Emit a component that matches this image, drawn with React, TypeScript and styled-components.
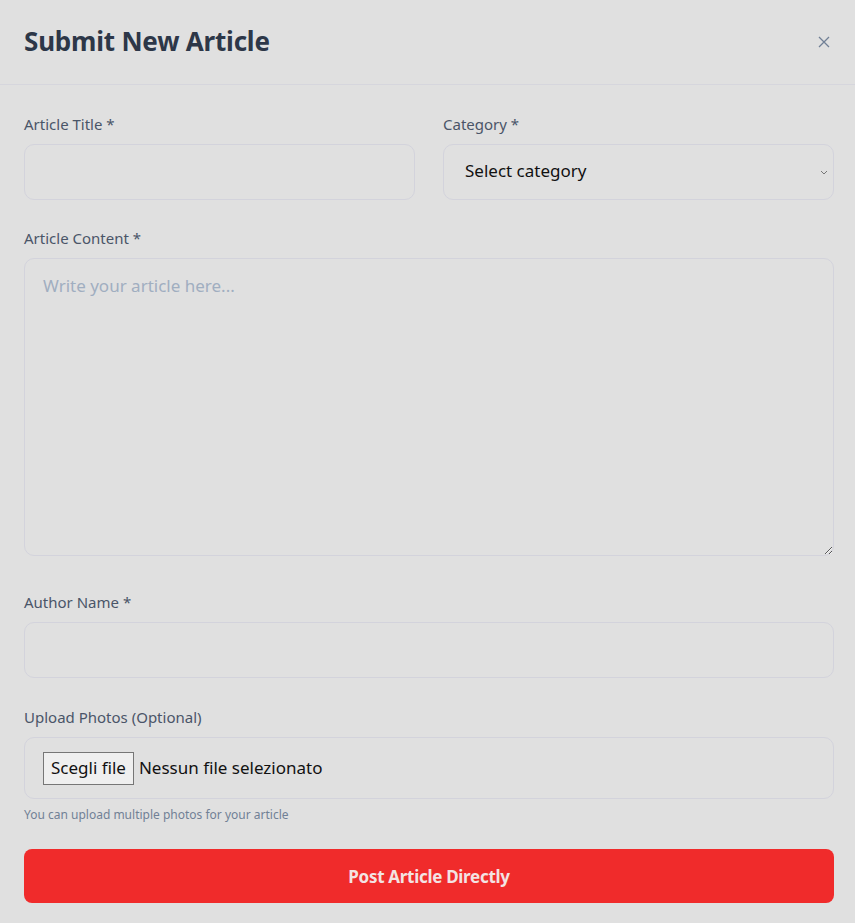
import React from "react";
import styled, { createGlobalStyle } from "styled-components";

const Global = createGlobalStyle`
  html, body { margin: 0; padding: 0; background: #e0e0e0; }
  body { font-family: "Noto Sans", "Open Sans", sans-serif; }
  * { box-sizing: border-box; }
`;

const Modal = styled.div`
  width: 855px;
  min-height: 923px;
  background: #e0e0e0;
`;

const Header = styled.header`
  height: 85px;
  display: flex;
  align-items: center;
  justify-content: space-between;
  padding: 0 24px 0 24px;
  border-bottom: 1px solid #d6d6dd;
`;

const Title = styled.h1`
  margin: 0 0 2px;
  font-size: 26px;
  font-weight: 700;
  color: #2d3748;
  letter-spacing: -0.2px;
`;

const Close = styled.button`
  border: none;
  background: none;
  padding: 0;
  margin-right: -1px;
  width: 16px;
  height: 16px;
  display: flex;
  align-items: center;
  justify-content: center;
  color: #718096;
  cursor: pointer;
`;

const Body = styled.form`
  padding: 0 21px 0 24px;
  display: flex;
  flex-direction: column;
`;

const Row = styled.div`
  display: grid;
  grid-template-columns: 1fr 1fr;
  column-gap: 28px;
`;

const Field = styled.div<{ $top: number }>`
  display: flex;
  flex-direction: column;
  margin-top: ${(p) => p.$top}px;
`;

const Label = styled.label`
  font-size: 15px;
  line-height: 20px;
  font-weight: 400;
  color: #4a5568;
  margin-bottom: 10px;
`;

const inputBase = `
  width: 100%;
  border: 1px solid #d3d3dc;
  border-radius: 10px;
  background: #e0e0e0;
  font-family: "Noto Sans", "Open Sans", sans-serif;
  font-size: 17px;
  color: #111;
  outline: none;
`;

const Input = styled.input`
  ${inputBase}
  height: 56px;
  padding: 0 18px;
`;

const Select = styled.div`
  ${inputBase}
  height: 56px;
  padding: 0 4px 0 21px;
  display: flex;
  align-items: center;
  justify-content: space-between;
  color: #111;
  & > span { margin-bottom: 3px; }
`;

const TextArea = styled.textarea`
  ${inputBase}
  display: block;
  height: 298px;
  padding: 15px 18px;
  resize: vertical;
  &::placeholder { color: #a0aec0; }
`;

const FileBox = styled.div`
  ${inputBase}
  height: 62px;
  padding: 0 18px;
  display: flex;
  align-items: center;
  gap: 5px;
`;

const FileButton = styled.span`
  display: inline-flex;
  align-items: center;
  height: 33px;
  padding: 0 7px 2px;
  border: 1px solid #767676;
  background: #efefef;
  font-size: 17px;
  color: #111;
`;

const FileText = styled.span`
  font-size: 17px;
  color: #111;
  margin-bottom: 2px;
`;

const Hint = styled.p`
  margin: 8px 0 0;
  font-size: 12px;
  line-height: 16px;
  color: #718096;
`;

const Submit = styled.button`
  margin-top: 26px;
  height: 54px;
  border: none;
  border-radius: 8px;
  background: #f02b2b;
  color: #f3e3e3;
  font-family: "Noto Sans", "Open Sans", sans-serif;
  font-size: 17px;
  font-weight: 700;
  letter-spacing: -0.3px;
  cursor: pointer;
`;

export default function App() {
  return (
    <>
      <Global />
      <Modal>
        <Header>
          <Title>Submit New Article</Title>
          <Close aria-label="Close">
            <svg width="12" height="12" viewBox="0 0 12 12" fill="none" stroke="currentColor" strokeWidth="1.3">
              <path d="M1 1L11 11M11 1L1 11" />
            </svg>
          </Close>
        </Header>
        <Body>
          <Row>
            <Field $top={29}>
              <Label>Article Title *</Label>
              <Input />
            </Field>
            <Field $top={29}>
              <Label>Category *</Label>
              <Select>
                <span>Select category</span>
                <svg width="10" height="10" viewBox="0 0 10 10" fill="none" stroke="#777" strokeWidth="1">
                  <path d="M2 4l3 3 3-3" />
                </svg>
              </Select>
            </Field>
          </Row>
          <Field $top={28}>
            <Label>Article Content *</Label>
            <TextArea placeholder="Write your article here..." />
          </Field>
          <Field $top={36}>
            <Label>Author Name *</Label>
            <Input />
          </Field>
          <Field $top={29}>
            <Label>Upload Photos (Optional)</Label>
            <FileBox>
              <FileButton>Scegli file</FileButton>
              <FileText>Nessun file selezionato</FileText>
            </FileBox>
            <Hint>You can upload multiple photos for your article</Hint>
          </Field>
          <Submit type="button">Post Article Directly</Submit>
        </Body>
      </Modal>
    </>
  );
}
